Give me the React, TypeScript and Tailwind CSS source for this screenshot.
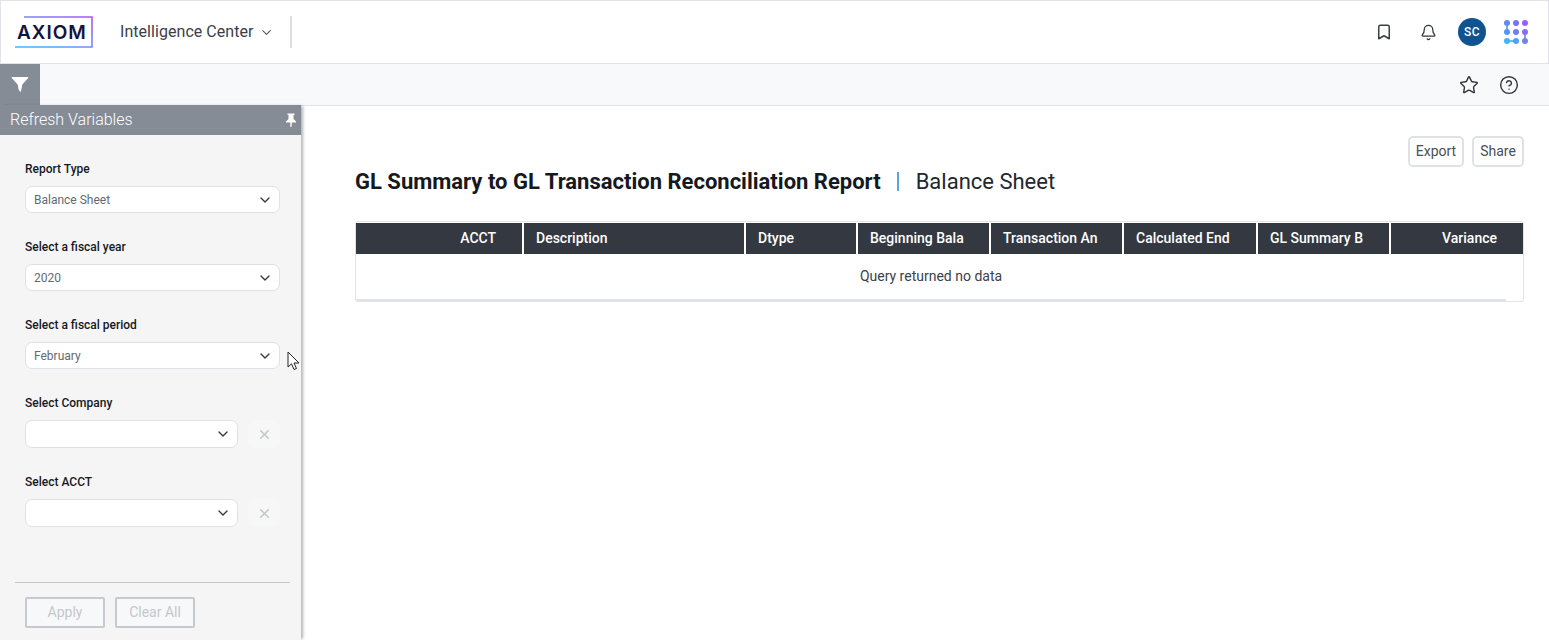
import React from "react";
import { Bookmark, Bell, ChevronDown, Star, CircleHelp, X } from "lucide-react";

const font = "font-['Roboto',sans-serif]";

function Select({ label, value }: { label: string; value: string }) {
  return (
    <div className="h-[78px]">
      <div className="h-[18px] text-[12px] leading-[18px] font-medium text-[#15191f]">{label}</div>
      <div className="mt-[8px] flex h-[27px] w-[255px] items-center justify-between rounded-[7px] border border-[#dfe1e6] bg-white pl-[8px] pr-[6px] text-[12px] text-[#646a73]">
        <span>{value}</span>
        <ChevronDown size={16} strokeWidth={2} className="text-[#343a42]" />
      </div>
    </div>
  );
}

function ClearableSelect({ label }: { label: string }) {
  return (
    <div className="h-[79px]">
      <div className="h-[18px] text-[12px] leading-[18px] font-medium text-[#15191f]">{label}</div>
      <div className="mt-[8px] flex items-center gap-[10px]">
        <div className="flex h-[28px] w-[213px] items-center justify-end rounded-[7px] border border-[#dfe1e6] bg-white pr-[6px]">
          <ChevronDown size={16} strokeWidth={2} className="text-[#343a42]" />
        </div>
        <div className="flex h-[28px] w-[32px] items-center justify-center rounded-[7px] bg-[#f7f7f8]">
          <X size={15} strokeWidth={2.8} className="text-[#c5c8cc]" />
        </div>
      </div>
    </div>
  );
}

const columns = [
  { name: "ACCT", w: "w-[168px]", right: true },
  { name: "Description", w: "w-[222px]" },
  { name: "Dtype", w: "w-[112px]" },
  { name: "Beginning Bala", w: "w-[133px]" },
  { name: "Transaction An", w: "w-[133px]" },
  { name: "Calculated End", w: "w-[134px]" },
  { name: "GL Summary B", w: "w-[133px]" },
  { name: "Variance", w: "w-[132px]", right: true },
];

export default function App() {
  return (
    <div className={`${font} relative h-[640px] w-[1549px] overflow-hidden bg-white`}>
      <header className="flex h-[64px] items-center border border-[#e1e3e8] bg-white pl-[14px] pr-[20px]">
        <div className="relative h-[32px] w-[78px]">
          <svg width="78" height="32" viewBox="0 0 78 32" className="absolute left-0 top-0">
            <defs>
              <linearGradient id="frame" x1="0" y1="1" x2="1" y2="0">
                <stop offset="0" stopColor="#38bdf8" />
                <stop offset="0.5" stopColor="#6f8cf2" />
                <stop offset="1" stopColor="#a855f7" />
              </linearGradient>
            </defs>
            <path d="M9 1 H77 V31 H0" fill="none" stroke="url(#frame)" strokeWidth="1.6" />
          </svg>
          <span className="absolute left-[2px] top-[6px] font-['Inter',sans-serif] text-[19px] leading-[22px] font-semibold tracking-[1px] text-[#14133b]">AXIOM</span>
        </div>
        <div className="ml-[27px] flex items-center text-[16px] tracking-[0.05px] text-[#3a4049]">
          Intelligence Center
          <ChevronDown size={15} strokeWidth={1.7} className="ml-[5px] mt-[1px] text-[#555a62]" />
        </div>
        <div className="ml-[16px] h-[32px] w-[2px] bg-[#dcdfe4]" />
        <div className="ml-auto flex items-center">
          <Bookmark size={18} strokeWidth={2} className="text-[#3a3f46]" />
          <Bell size={17} strokeWidth={1.8} className="ml-[27px] text-[#30353c]" />
          <div className="ml-[21px] flex h-[28px] w-[28px] items-center justify-center rounded-full bg-[#0f5391] text-[12px] font-medium tracking-[0.5px] text-white">SC</div>
          <svg width="24" height="24" viewBox="0 0 24 24" className="ml-[18px]">
            <path d="M3 3V12" stroke="#5a90f0" strokeWidth="1.6" />
            <path d="M3 21H12" stroke="#45aaf5" strokeWidth="1.6" />
            <path d="M21 12V21" stroke="#7a78f0" strokeWidth="1.6" />
            <circle cx="3" cy="3" r="3" fill="#5f8cf0" />
            <circle cx="12" cy="3" r="3" fill="#7f70f2" />
            <circle cx="21" cy="3" r="3" fill="#a05cf5" />
            <circle cx="3" cy="12" r="3" fill="#5099f2" />
            <circle cx="12" cy="12" r="3" fill="#6f7ef0" />
            <circle cx="21" cy="12" r="3" fill="#8a6cf2" />
            <circle cx="3" cy="21" r="3" fill="#3fb5f8" />
            <circle cx="12" cy="21" r="3" fill="#4fa0f5" />
            <circle cx="21" cy="21" r="3" fill="#6f84ef" />
          </svg>
        </div>
      </header>

      <div className="flex h-[42px] items-center border-b border-[#e1e3e8] bg-[#f8f9fb] pr-[30px]">
        <div className="flex h-[41px] w-[40px] items-center justify-center self-start bg-[#868c96]">
          <svg width="18" height="15" viewBox="0 0 18 15"><path d="M0.500 0H17.500C17.500 1.500 11.500 6.500 11 8.500C10.800 10 10.800 12 9.500 15C8 13.500 7.200 12.500 7 8.500C6.500 6.500 0.500 1.500 0.500 0Z" fill="#fff" /></svg>
        </div>
        <div className="ml-auto flex items-center gap-[20px]">
          <Star size={20} strokeWidth={1.7} className="text-[#30353c]" />
          <CircleHelp size={20} strokeWidth={1.7} className="text-[#30353c]" />
        </div>
      </div>

      <div className="flex h-[534px]">
        <aside className="relative z-10 -mt-[1px] flex h-[535px] w-[301px] shrink-0 flex-col bg-[#f5f5f5] shadow-[3px_0_3px_-1px_rgba(0,0,0,0.3)]">
          <div className="flex h-[30px] items-center justify-between bg-[#868c96] pl-[10px] pr-[4px] text-[16px] font-light text-white">
            <span>Refresh Variables</span>
            <svg width="12" height="14" viewBox="0 0 12 14"><path d="M2.500 0.500H9.500V2H8.500V6L11 8.500V9.500H6.700V13.500L6 14L5.300 13.500V9.500H1V8.500L3.500 6V2H2.500Z" fill="#fff" /></svg>
          </div>
          <div className="flex-1 pl-[25px] pt-[25px]">
            <Select label="Report Type" value="Balance Sheet" />
            <Select label="Select a fiscal year" value="2020" />
            <Select label="Select a fiscal period" value="February" />
            <ClearableSelect label="Select Company" />
            <ClearableSelect label="Select ACCT" />
          </div>
          <div className="ml-[15px] mr-[11px] border-t border-[#c3c6cc] pb-[12px] pl-[10px] pt-[14px]">
            <div className="flex gap-[10px]">
              <div className="flex h-[31px] w-[80px] items-center justify-center rounded-[2px] border-2 border-[#c6c9ce] bg-[#f7f8fa] text-[14px] text-[#c4c7cb]">Apply</div>
              <div className="flex h-[31px] w-[80px] items-center justify-center rounded-[2px] border-2 border-[#c6c9ce] bg-[#f7f8fa] text-[14px] text-[#c4c7cb]">Clear All</div>
            </div>
          </div>
        </aside>

        <main className="flex-1 pl-[54px] pr-[25px] pt-[30px]">
          <div className="flex h-[31px] justify-end gap-[8px]">
            <div className="flex h-[31px] w-[56px] items-center justify-center rounded-[5px] border-2 border-[#dfe1e6] text-[14px] text-[#4b4f58]">Export</div>
            <div className="flex h-[31px] w-[52px] items-center justify-center rounded-[5px] border-2 border-[#dfe1e6] text-[14px] text-[#4b4f58]">Share</div>
          </div>
          <div className="flex h-[28px] items-center text-[#15191f]">
            <span className="text-[22px] font-bold">GL Summary to GL Transaction Reconciliation Report</span>
            <span className="ml-[16px] mr-[17px] h-[19px] w-[2px] bg-[#5ba3dc]" />
            <span className="text-[22px] font-normal text-[#23272e]">Balance Sheet</span>
          </div>
          <div className="mt-[26px] h-[81px] w-[1169px] rounded-[3px] border border-[#e1e3e8] pt-[1px]">
            <div className="flex h-[31px]">
              {columns.map((c, i) => (
                <div
                  key={c.name}
                  className={`${c.w} flex items-center bg-[#343840] text-[14px] font-medium text-white ${i < columns.length - 1 ? "border-r-2 border-white" : ""} ${c.right ? "justify-end pr-[26px]" : "pl-[12px]"}`}
                >
                  {c.name}
                </div>
              ))}
            </div>
            <div className="mr-[17px] flex h-[47px] items-center justify-center border-b-2 border-[#e1e3e8] text-[14px] text-[#3d4149]">
              <span>Query returned no data</span>
            </div>
          </div>
        </main>
      </div>

      <svg width="14" height="21" viewBox="0 0 14 21" className="absolute left-[287px] top-[351px] z-20">
        <path d="M1 1V16L4.500 12.800L7 18.500L9.500 17.500L7 12H12Z" fill="#fff" stroke="#222" strokeWidth="1" />
      </svg>
    </div>
  );
}
